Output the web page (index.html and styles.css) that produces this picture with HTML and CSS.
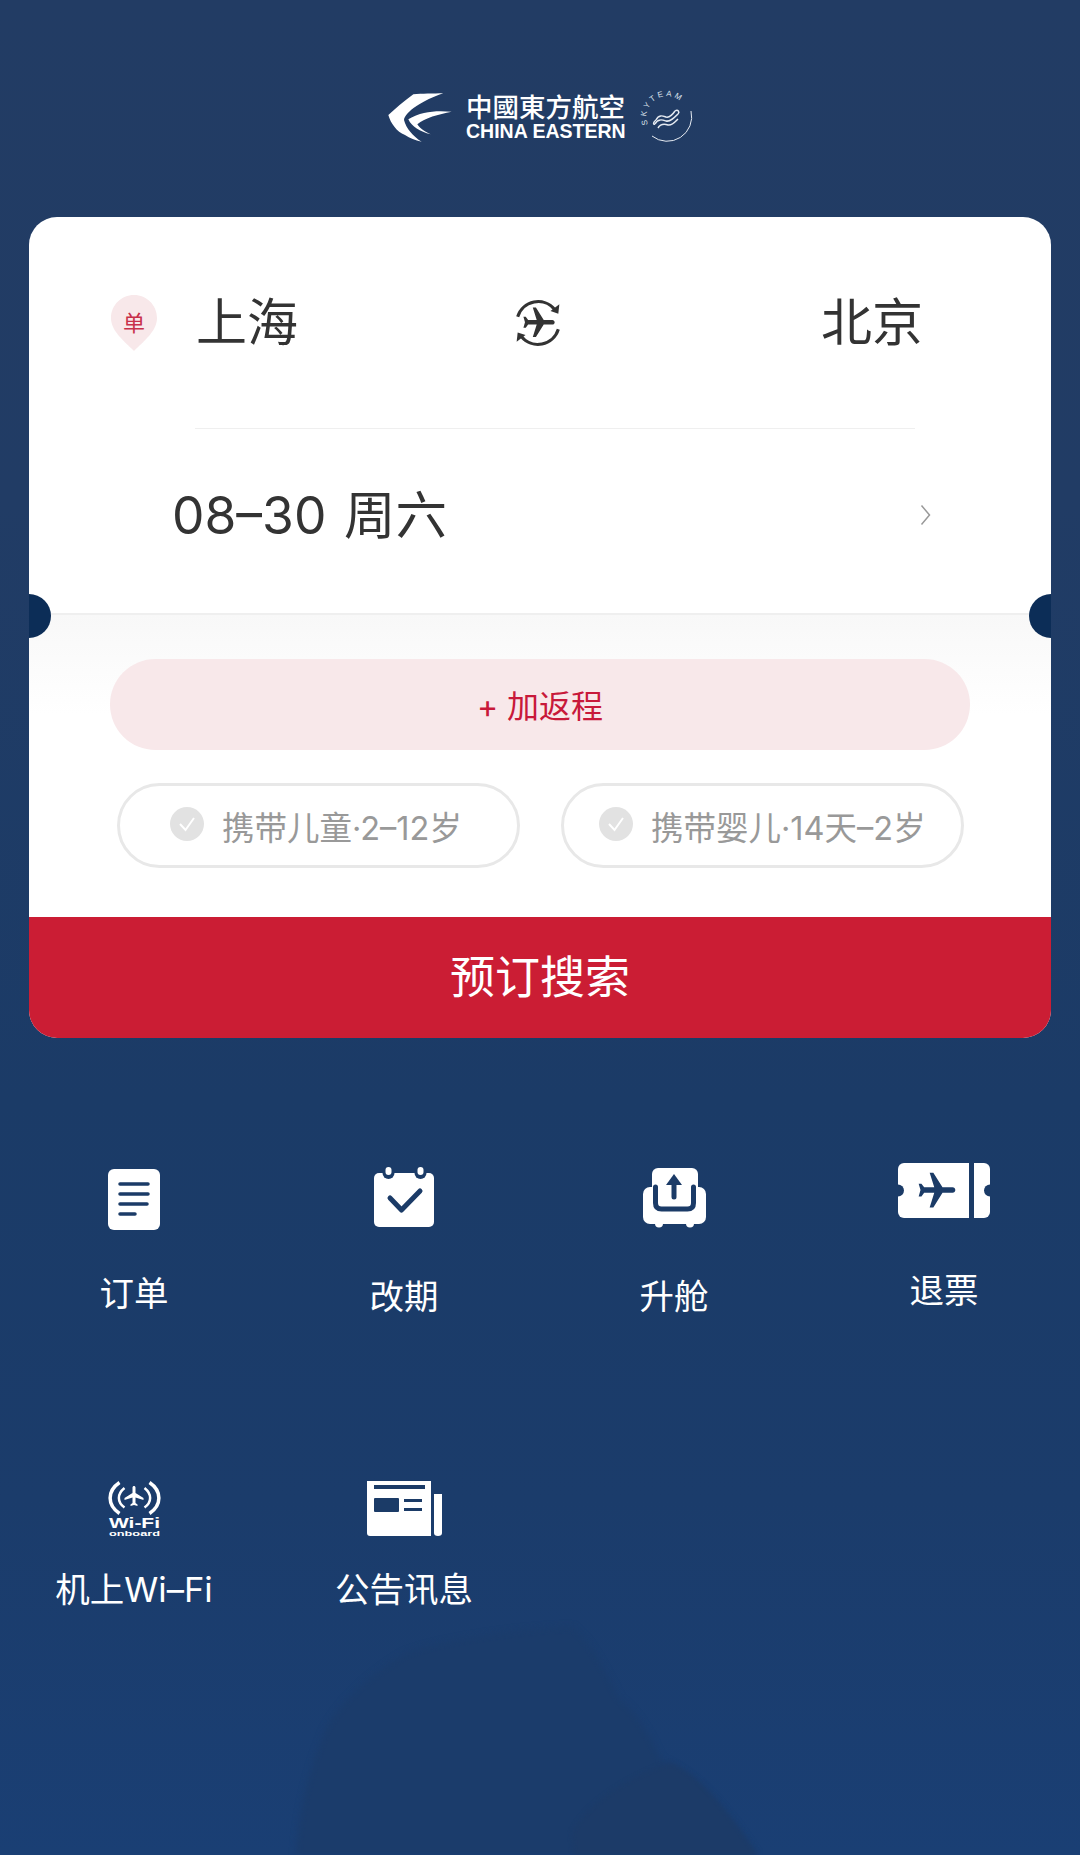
FILE: index.html
```html
<!DOCTYPE html>
<html lang="zh-CN">
<head>
  <meta charset="UTF-8" />
  <title>中国东方航空</title>
  <link rel="stylesheet" href="styles.css">
</head>
<body>
  <svg class="page-bg" viewBox="0 0 1080 1855" aria-hidden="true">
    <path class="blob" d="M572 1627C520 1628 440 1640 406 1653C360 1680 335 1710 324 1733C305 1780 298 1820 296 1855H757C730 1815 700 1775 661 1760C650 1735 635 1710 620 1700C605 1670 590 1640 572 1627Z" />
    <path class="blob-dark" d="M671 1763C630 1775 585 1805 572 1833L574 1855H757C730 1815 700 1775 671 1763Z" />
  </svg>

  <svg class="defs" width="0" height="0">
    <symbol id="plane" viewBox="0 0 24 24">
      <path d="M21 16v-2l-8-5V3.5c0-.83-.67-1.5-1.5-1.5S10 2.67 10 3.5V9l-8 5v2l8-2.5V19l-2 1.5V22l3.5-1 3.5 1v-1.5L13 19v-5.5l8 2.5z" />
    </symbol>
  </svg>

  <div class="page">
    <header class="brand">
      <svg class="bird" viewBox="0 0 240 195">
        <path d="M190 25C160 26 125 26 100 28C70 50 45 72 25 90C32 115 50 140 75 150C90 160 105 166 125 170C100 155 78 130 72 105C75 80 130 45 190 25Z" />
        <path d="M215 80C170 76 125 78 85 103C95 125 120 140 152 148C130 138 118 128 112 118C135 98 175 88 215 80Z" />
      </svg>
      <div class="brand-name">
        <div class="brand-cn">中國東方航空</div>
        <div class="brand-en">CHINA EASTERN</div>
      </div>
      <svg class="skyteam" viewBox="0 0 56 56">
        <path class="sky-ring" d="M52 22A24.500 24.500 0 0 1 13 47" />
        <path id="sky-arc" class="sky-none" d="M9 35.500A20.500 20.500 0 1 1 48.500 28" />
        <text class="sky-text"><textPath href="#sky-arc">SKYTEAM</textPath></text>
        <path class="sky-wave" d="M17 31C20 25 24 27 27 28C31 29 34 25 36 22" />
        <path class="sky-wave" d="M16 35C19 29 24 31 27 32C31 33 35 29 39 25" />
        <path class="sky-wave" d="M19 39C22 34 26 35 29 36C33 37 36 33 39 30" />
        <path class="sky-wave" d="M17 31C14 33 14 36 16 35M36 22C39 20 41 23 39 25" />
      </svg>
    </header>

    <main class="card">
      <span class="notch notch-left"></span>
      <span class="notch notch-right"></span>

      <section class="trip">
        <div class="route">
          <div class="route-from">
            <svg class="pin" viewBox="0 0 46 56">
              <path d="M23 0C35.700 0 46 10.300 46 23C46 36 33 46 23 56C13 46 0 36 0 23C0 10.300 10.300 0 23 0Z" />
              <text x="23" y="36" text-anchor="middle">单</text>
            </svg>
            <span class="city">上海</span>
          </div>
          <svg class="swap" viewBox="0 0 44 48">
            <path d="M2.500 18A20.500 20.500 0 0 1 38 11" />
            <path class="swap-head" d="M42.500 6L41.500 15L34 12.500Z" />
            <path d="M41.500 30A20.500 20.500 0 0 1 6 37" />
            <path class="swap-head" d="M1.500 42L2.500 33L10 35.500Z" />
            <use href="#plane" x="5" y="6" width="36" height="36" transform="rotate(90 23 24)" />
          </svg>
          <span class="city city-to">北京</span>
        </div>
        <div class="divider"></div>
        <div class="date-row">
          <span class="date">08–30 周六</span>
          <svg class="chevron" viewBox="0 0 11 22"><path d="M1.500 1.500L9.500 11L1.500 20.500" /></svg>
        </div>
      </section>

      <section class="options">
        <div class="add-return">+ 加返程</div>
        <div class="chips">
          <div class="chip">
            <svg class="check" viewBox="0 0 34 34"><circle cx="17" cy="17" r="17" /><path d="M10 17L15.500 23L24 11" /></svg>
            <span>携带儿童·2–12岁</span>
          </div>
          <div class="chip">
            <svg class="check" viewBox="0 0 34 34"><circle cx="17" cy="17" r="17" /><path d="M10 17L15.500 23L24 11" /></svg>
            <span>携带婴儿·14天–2岁</span>
          </div>
        </div>
      </section>

      <div class="search-btn">预订搜索</div>
    </main>

    <nav class="services">
      <div class="service">
        <svg class="ico ico-doc" viewBox="0 0 52 61">
          <rect class="white" width="52" height="61" rx="6" />
          <path class="cut" d="M12 15H40M12 25H40M12 35H39M12 45H27" />
        </svg>
        <span class="label">订单</span>
      </div>
      <div class="service">
        <svg class="ico ico-cal" viewBox="0 0 60 60">
          <rect class="white" y="6" width="60" height="54" rx="5" />
          <circle class="hole" cx="14.500" cy="6" r="6" />
          <circle class="hole" cx="46.500" cy="6" r="6" />
          <rect class="white" x="11.500" width="6" height="8" rx="3" />
          <rect class="white" x="43.500" width="6" height="8" rx="3" />
          <path class="cut cut-wide" d="M16 31L27.500 43L46 24" />
        </svg>
        <span class="label">改期</span>
      </div>
      <div class="service">
        <svg class="ico ico-seat" viewBox="0 0 63 60">
          <rect class="white" x="9" width="46" height="44" rx="6" />
          <circle class="white" cx="16" cy="55.500" r="4" />
          <circle class="white" cx="47" cy="55.500" r="4" />
          <rect class="white" y="19" width="63" height="37" rx="7" />
          <rect class="white" x="14" y="10" width="35" height="25" />
          <path class="cut cut-wide" d="M12.500 19V35Q12.500 41 18.500 41H44.500Q50.500 41 50.500 35V19" />
          <path class="cut cut-wide" d="M31 29V13" />
          <path class="fill-navy" d="M23 17L31 6L39 17Z" />
        </svg>
        <span class="label">升舱</span>
      </div>
      <div class="service">
        <svg class="ico ico-ticket" viewBox="0 0 92 56">
          <rect class="white" width="92" height="55" rx="6" />
          <circle class="hole" cx="0" cy="27.500" r="6" />
          <circle class="hole" cx="92" cy="27.500" r="6" />
          <rect class="hole" x="71" width="5" height="56" />
          <use class="fill-navy" href="#plane" x="17" y="6" width="44" height="44" transform="rotate(90 39 28)" />
        </svg>
        <span class="label">退票</span>
      </div>
      <div class="service">
        <svg class="ico ico-wifi" viewBox="0 0 53 56">
          <path class="wave" d="M11.500 1.500C-1 10 -1 24 11.500 32.500" />
          <path class="wave" d="M41.500 1.500C54 10 54 24 41.500 32.500" />
          <path class="wave wave-thin" d="M16.500 7C9 13 9 21 16.500 26.500" />
          <path class="wave wave-thin" d="M36.500 7C44 13 44 21 36.500 26.500" />
          <use class="fill-white" href="#plane" x="14.500" y="3" width="24" height="24" />
          <text class="wifi-big" x="1" y="47" textLength="51" lengthAdjust="spacingAndGlyphs">Wi-Fi</text>
          <text class="wifi-small" x="1" y="55" textLength="51" lengthAdjust="spacingAndGlyphs">onboard</text>
        </svg>
        <span class="label">机上Wi–Fi</span>
      </div>
      <div class="service">
        <svg class="ico ico-news" viewBox="0 0 75 55">
          <path class="white" d="M0 0H64V55H3Q0 55 0 52Z" />
          <path class="white" d="M67 13H75V52Q75 55 71 55Q67 55 67 52Z" />
          <rect class="hole" x="7" y="4" width="51" height="4" />
          <rect class="hole" x="7" y="17" width="25" height="14" rx="1" />
          <rect class="hole" x="37" y="18" width="18" height="3" />
          <rect class="hole" x="37" y="27" width="18" height="3" />
        </svg>
        <span class="label">公告讯息</span>
      </div>
    </nav>
  </div>
</body>
</html>
```

FILE: styles.css
```css
* {
  box-sizing: border-box;
}
html,
body {
  margin: 0;
  padding: 0;
}
body {
  position: relative;
  width: 1080px;
  height: 1855px;
  overflow: hidden;
  font-family: Inter, "Noto Sans CJK SC", sans-serif;
  background: linear-gradient(#223c64 0, #213c65 500px, #1b3b67 1100px, #1b3c6b 1500px, #1a3f74 1855px);
}
.page-bg {
  position: absolute;
  top: 0;
  left: 0;
  width: 1080px;
  height: 1855px;
}
.blob {
  fill: #1b3c6b;
  filter: blur(3px);
}
.blob-dark {
  fill: #1c3b68;
  filter: blur(2px);
}
.defs {
  position: absolute;
}
.page {
  position: relative;
  padding: 0 29px;
}

/* logo */
.brand {
  height: 217px;
  padding: 85px 0 0 351px;
  display: flex;
  align-items: flex-start;
}
.bird {
  width: 80px;
  height: 65px;
  fill: #fff;
  margin-right: 6px;
}
.brand-name {
  color: #fff;
  width: 162px;
  margin-top: 7px;
}
.brand-cn {
  font-size: 26.500px;
  line-height: 30px;
  white-space: nowrap;
  font-weight: 500;
}
.brand-en {
  font-family: "Liberation Sans", sans-serif;
  font-size: 19.500px;
  line-height: 19px;
  font-weight: bold;
  white-space: nowrap;
}
.skyteam {
  width: 56px;
  height: 56px;
  margin: 4px 0 0 11px;
}
.sky-ring {
  fill: none;
  stroke: #e6ebf2;
  stroke-width: 1;
}
.sky-none {
  fill: none;
}
.sky-text {
  fill: #dbe2ec;
  font-family: "Liberation Sans", sans-serif;
  font-size: 8px;
  letter-spacing: 2.500px;
}
.sky-wave {
  fill: none;
  stroke: #e6ebf2;
  stroke-width: 1.500;
}

/* card */
.card {
  position: relative;
  height: 821px;
  background: #fff;
  border-radius: 28px;
  overflow: hidden;
}
.notch {
  position: absolute;
  top: 377px;
  width: 44px;
  height: 44px;
  border-radius: 50%;
  background: #0c2d57;
  z-index: 1;
}
.notch-left {
  left: -22px;
}
.notch-right {
  right: -22px;
}
.trip {
  height: 396px;
  padding-top: 56px;
  color: #333;
}
.route {
  display: grid;
  grid-template-columns: 404px 46px 1fr;
  align-items: center;
  height: 100px;
  padding: 0 128px 0 82px;
}
.route-from {
  display: flex;
  align-items: center;
}
.pin {
  width: 46px;
  height: 56px;
  margin-right: 39px;
}
.pin path {
  fill: #f8e8ea;
}
.pin text {
  fill: #c8304a;
  font-size: 22px;
}
.city {
  font-size: 51px;
  line-height: 60px;
}
.city-to {
  text-align: right;
}
.swap {
  width: 46px;
  height: 50px;
  fill: none;
  stroke: #333;
  stroke-width: 3;
}
.swap-head {
  fill: #333;
  stroke: none;
}
.swap use {
  fill: #333;
  stroke: none;
}
.divider {
  height: 1px;
  margin: 55px 136px 0 166px;
  background: #efefef;
}
.date-row {
  display: flex;
  align-items: center;
  justify-content: space-between;
  height: 60px;
  margin-top: 56px;
  padding: 0 120px 0 143px;
}
.date {
  font-size: 51.500px;
  line-height: 60px;
  word-spacing: 3px;
}
.chevron {
  width: 11px;
  height: 22px;
  fill: none;
  stroke: #999;
  stroke-width: 1.500;
}

/* return + chips */
.options {
  height: 304px;
  padding: 44px 81px 0;
  border-top: 2px solid #efefef;
  background: linear-gradient(#f8f8f8 0, #fff 100px);
}
.add-return {
  height: 91px;
  border-radius: 46px;
  background: #f8e8ea;
  color: #c8193a;
  font-size: 32px;
  line-height: 96px;
  text-align: center;
}
.chips {
  display: flex;
  gap: 41px;
  margin-top: 33px;
  padding-left: 7px;
}
.chip {
  display: flex;
  align-items: center;
  width: 403px;
  height: 85px;
  padding-left: 50px;
  border: 3px solid #e8e8e8;
  border-radius: 43px;
  color: #999;
  font-size: 32.500px;
  white-space: nowrap;
}
.chip + .chip {
  padding-left: 35px;
}
.check {
  width: 34px;
  height: 34px;
  margin: 0 18px 4px 0;
  flex-shrink: 0;
}
.check circle {
  fill: #e2e2e2;
}
.check path {
  fill: none;
  stroke: #fff;
  stroke-width: 2;
}
.search-btn {
  height: 121px;
  background: #cb1d34;
  color: #fff;
  font-size: 45px;
  line-height: 121px;
  text-align: center;
}

/* services grid */
.services {
  display: grid;
  grid-template-columns: repeat(4, 270px);
  grid-auto-rows: 318px;
  margin: 125px -29px 0 -30px;
}
.service {
  display: flex;
  flex-direction: column;
  align-items: center;
}
.label {
  color: #fff;
  font-size: 34.500px;
  line-height: 40px;
  white-space: nowrap;
}
.ico {
  flex-shrink: 0;
}
.white {
  fill: #fff;
}
.fill-white {
  fill: #fff;
}
.fill-navy {
  fill: #1b3b67;
}
.hole {
  fill: #1b3b67;
}
.cut {
  fill: none;
  stroke: #1b3b67;
  stroke-width: 3.500;
  stroke-linecap: round;
  stroke-linejoin: round;
}
.cut-wide {
  stroke-width: 5;
}
.ico-doc {
  width: 52px;
  height: 61px;
  margin: 6px 0 44px;
}
.ico-cal {
  width: 60px;
  height: 60px;
  margin: 4px 0 50px;
}
.ico-seat {
  width: 63px;
  height: 60px;
  margin: 5px 0 49px;
}
.ico-ticket {
  width: 92px;
  height: 56px;
  margin: 0 0 52px;
}
.ico-wifi {
  width: 53px;
  height: 56px;
  margin: 0 0 33px;
}
.ico-news {
  width: 75px;
  height: 55px;
  margin: 0 0 34px;
}
.wave {
  fill: none;
  stroke: #fff;
  stroke-width: 3.500;
}
.wave-thin {
  stroke-width: 2.500;
}
.wifi-big {
  fill: #fff;
  font-family: "Liberation Sans", sans-serif;
  font-size: 15px;
  font-weight: bold;
}
.wifi-small {
  fill: #fff;
  font-family: "Liberation Sans", sans-serif;
  font-size: 8px;
  font-weight: bold;
}
```
